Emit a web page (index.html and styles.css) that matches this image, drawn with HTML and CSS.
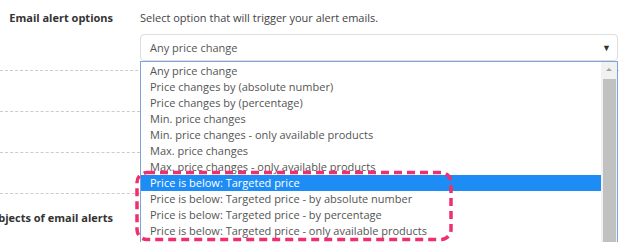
FILE: index.html
```html
<!DOCTYPE html>
<html lang="en">
<head>
    <meta charset="UTF-8">
    <title>Email alert options</title>
    <link rel="stylesheet" href="styles.css">
</head>
<body>
    <div class="form">
        <!-- Email alert options row -->
        <div class="row row-first">
            <div class="label">Email alert options</div>
            <div class="field">
                <p class="hint">Select option that will trigger your alert emails.</p>
                <div class="select">
                    <span>Any price change</span>
                    <span class="arrow">&#9660;</span>
                </div>
            </div>
        </div>
        <div class="row"></div>
        <div class="row"></div>
        <div class="row"></div>
        <div class="row row-subjects">
            <div class="label">Subjects of email alerts</div>
        </div>

        <!-- Open dropdown list -->
        <div class="dropdown">
            <ul class="options">
                <li>Any price change</li>
                <li>Price changes by (absolute number)</li>
                <li>Price changes by (percentage)</li>
                <li>Min. price changes</li>
                <li>Min. price changes - only available products</li>
                <li>Max. price changes</li>
                <li>Max. price changes - only available products</li>
                <li class="selected">Price is below: Targeted price</li>
                <li>Price is below: Targeted price - by absolute number</li>
                <li>Price is below: Targeted price - by percentage</li>
                <li>Price is below: Targeted price - only available products</li>
            </ul>
            <div class="scrollbar">
                <span class="up"></span>
                <span class="thumb"></span>
            </div>
        </div>

        <!-- Highlight annotation -->
        <svg class="mark" width="322" height="74" viewBox="0 0 322 74">
            <rect x="3" y="2.5" width="314" height="67" rx="10" ry="10"
                  fill="none" stroke="#f0306e" stroke-width="3.5" stroke-dasharray="8 5"/>
        </svg>
    </div>
</body>
</html>
```

FILE: styles.css
```css
body {
    margin: 0;
    font-family: 'Open Sans', 'Liberation Sans', sans-serif;
    font-size: 11px;
    color: #444;
    background: #fff;
    overflow: hidden;
}

.form {
    position: relative;
    height: 242px;
    overflow: hidden;
}

.row {
    display: flex;
    height: 40px;
    border-bottom: 1px dashed #ccc;
    width: 140px;
}

.row-first {
    height: 70px;
    width: auto;
}

.label {
    flex: 0 0 113px;
    width: 113px;
    min-width: 0;
    display: flex;
    justify-content: flex-end;
    white-space: nowrap;
    font-weight: bold;
    font-size: 11px;
    color: #333;
    padding-top: 9px;
    line-height: 18px;
    margin-right: 27px;
}

.row-subjects {
    border-bottom: none;
}

.row-subjects .label {
    padding-top: 15px;
}

.field {
    flex: 1;
    padding-right: 1px;
}

.hint {
    margin: 9px 0 7px;
    line-height: 18px;
    color: #444;
}

.select {
    display: flex;
    justify-content: space-between;
    align-items: center;
    height: 25px;
    border: 1px solid #ddd;
    border-radius: 4px;
    padding: 0 6px 0 9px;
    color: #555;
}

.arrow {
    font-size: 9px;
    color: #333;
}

.dropdown {
    position: absolute;
    left: 140px;
    top: 61px;
    width: 476px;
    height: 200px;
    border: 1px solid #7ea3de;
    background: #fff;
    display: flex;
}

.options {
    list-style: none;
    margin: 1px 0 0;
    padding: 0;
    flex: 1;
}

.options li {
    height: 16px;
    line-height: 16px;
    padding-left: 9px;
    color: #555;
    white-space: nowrap;
}

.options li.selected {
    background: #1e8cf5;
    color: #fff;
}

.scrollbar {
    width: 16px;
    background: #f1f1f1;
    position: relative;
}

.up {
    display: block;
    margin: 6px auto 0;
    width: 0;
    height: 0;
    border-left: 3px solid transparent;
    border-right: 3px solid transparent;
    border-bottom: 3px solid #a3a3a3;
}

.thumb {
    display: block;
    margin: 8px 1px 0 2px;
    height: 170px;
    background: #c1c1c1;
}

.mark {
    position: absolute;
    left: 134px;
    top: 170px;
}
```
